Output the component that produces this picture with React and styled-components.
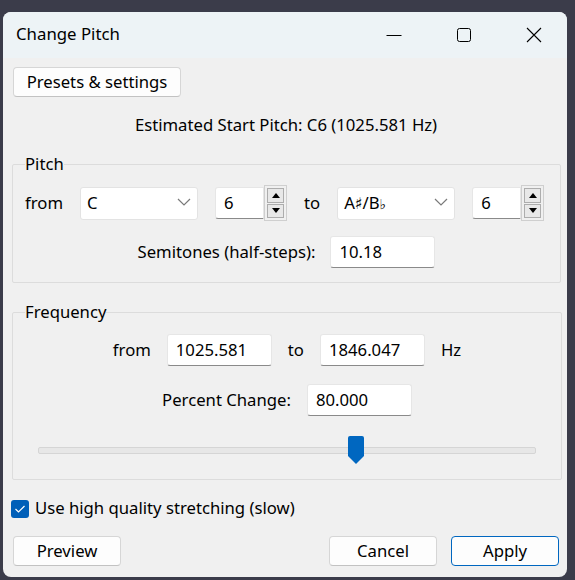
import React from 'react';
import styled, { createGlobalStyle } from 'styled-components';

const GlobalStyle = createGlobalStyle`
  html, body {
    margin: 0;
    padding: 0;
    background: #3b3c4a;
    overflow: hidden;
  }
  body {
    font-family: 'Noto Sans', 'DejaVu Sans', 'Open Sans', sans-serif;
    color: #000;
  }
`;

const FONT = '16.7px';

const Desktop = styled.div`
  width: 575px;
  height: 580px;
  padding: 12px 8px 3px 3px;
  box-sizing: border-box;
`;

const Window = styled.div`
  width: 564px;
  height: 565px;
  background: #f0f0f0;
  border-radius: 8px;
  overflow: hidden;
  display: flex;
  flex-direction: column;
`;

const TitleBar = styled.div`
  height: 46px;
  flex: none;
  display: flex;
  align-items: center;
  background: #edf3f6;
  padding-left: 13px;
`;

const Title = styled.div`
  flex: 1;
  font-size: 16.8px;
  padding-bottom: 3px;
`;

const Controls = styled.div`
  display: flex;
  height: 100%;
  margin-right: -2px;
`;

const ControlButton = styled.div`
  width: 70px;
  height: 100%;
  display: flex;
  align-items: center;
  justify-content: center;
`;

const Body = styled.div`
  flex: 1;
  display: flex;
  flex-direction: column;
  padding: 9px 8px 0 8px;
`;

const PushButton = styled.button`
  font-family: inherit;
  font-size: ${FONT};
  color: #000;
  height: 30px;
  width: ${(p) => p.$width}px;
  background: #fdfdfd;
  border: 1px solid ${(p) => (p.$default ? '#0067c0' : '#d6d6d6')};
  border-bottom-color: ${(p) => (p.$default ? '#0067c0' : '#c2c2c2')};
  border-radius: 4px;
  padding: 0 0 2px 0;
`;

const TopRow = styled.div`
  padding-left: 2px;
`;

const Estimate = styled.div`
  text-align: center;
  font-size: ${FONT};
  margin-top: 16px;
  padding-left: 2px;
`;

const Group = styled.fieldset`
  margin: ${(p) => p.$top}px 0 0 1px;
  width: ${(p) => p.$width}px;
  box-sizing: border-box;
  height: ${(p) => p.$height}px;
  border: 1px solid #dcdcdc;
  border-radius: 2px;
  padding: 0 12px;
  display: flex;
  flex-direction: column;
  align-items: center;
`;

const Legend = styled.legend`
  font-size: ${FONT};
  padding: 0;
  line-height: 20px;
`;

const Row = styled.div`
  display: flex;
  align-items: center;
  gap: ${(p) => p.$gap || 16}px;
  margin-top: ${(p) => p.$top}px;
  align-self: ${(p) => (p.$left ? 'flex-start' : 'center')};
`;

const Label = styled.span`
  font-size: ${FONT};
  white-space: nowrap;
  padding-bottom: 2px;
`;

const TextBox = styled.div`
  width: ${(p) => p.$width}px;
  height: 32px;
  box-sizing: border-box;
  background: #fff;
  border: 1px solid #e6e6e6;
  border-bottom: 1px solid #8a8a8a;
  border-radius: 3px;
  display: flex;
  align-items: center;
  padding: 0 0 2px 8px;
  font-size: ${FONT};
`;

const Combo = styled.div`
  width: 118px;
  height: 33px;
  box-sizing: border-box;
  background: #fff;
  border: 1px solid #e3e3e3;
  border-radius: 3px;
  display: flex;
  align-items: center;
  justify-content: space-between;
  padding: 0 6px 2px 6px;
  font-size: ${FONT};
`;

const Accidental = styled.span`
  font-family: 'DejaVu Sans', sans-serif;
  font-size: ${(p) => p.$size}px;
`;

const Spin = styled.div`
  display: flex;
  align-items: center;
`;

const SpinField = styled(TextBox)`
  width: 49px;
  border-radius: 3px 0 0 3px;
`;

const SpinButtons = styled.div`
  width: 23px;
  height: 36px;
  box-sizing: border-box;
  border: 1px solid #cfcfcf;
  background: #f0f0f0;
  display: flex;
  flex-direction: column;
  padding: 2px;
  gap: 1px;
`;

const SpinArrow = styled.div`
  flex: 1;
  background: #e8e8e8;
  border: 1px solid #adadad;
  display: flex;
  align-items: center;
  justify-content: center;
`;

const SliderBox = styled.div`
  position: relative;
  align-self: stretch;
  margin: 20px 13px 0 13px;
  height: 28px;
  display: flex;
  align-items: center;
`;

const Track = styled.div`
  flex: 1;
  height: 5px;
  background: #e7e7e7;
  border: 1px solid #d5d5d5;
  border-radius: 2px;
`;

const Thumb = styled.svg`
  position: absolute;
  top: 0;
  margin-left: -8px;
`;

const CheckRow = styled.div`
  display: flex;
  align-items: center;
  gap: 6px;
  margin-top: 16px;
`;

const CheckBox = styled.div`
  width: 18px;
  height: 18px;
  border-radius: 3px;
  background: #005fb8;
  display: flex;
  align-items: center;
  justify-content: center;
`;

const ButtonBar = styled.div`
  display: flex;
  align-items: center;
  gap: 14px;
  margin-top: 15px;
  padding: 0 0 0 2px;
`;

const Spacer = styled.div`
  flex: 1;
`;

const Chevron = () => (
  <svg width="14" height="8" viewBox="0 0 14 8">
    <path d="M1 1 L7 7 L13 1" fill="none" stroke="#7a7a7a" strokeWidth="1.2" />
  </svg>
);

const Triangle = ({ up }) => (
  <svg width="8" height="5" viewBox="0 0 8 5">
    <path d={up ? 'M0 5 L4 0 L8 5 Z' : 'M0 0 L4 5 L8 0 Z'} fill="#000" />
  </svg>
);

const SpinControl = ({ value }) => (
  <Spin>
    <SpinField>{value}</SpinField>
    <SpinButtons>
      <SpinArrow>
        <Triangle up />
      </SpinArrow>
      <SpinArrow>
        <Triangle />
      </SpinArrow>
    </SpinButtons>
  </Spin>
);

const sliderPos = 0.644;

export default function App() {
  return (
    <Desktop>
      <GlobalStyle />
      <Window>
        <TitleBar>
          <Title>Change Pitch</Title>
          <Controls>
            <ControlButton>
              <svg width="16" height="16" viewBox="0 0 16 16">
                <path d="M0.5 8.5 H15.5" stroke="#000" strokeWidth="1" />
              </svg>
            </ControlButton>
            <ControlButton>
              <svg width="16" height="16" viewBox="0 0 16 16">
                <rect x="1.5" y="1.5" width="13" height="13" rx="2" fill="none" stroke="#000" strokeWidth="1" />
              </svg>
            </ControlButton>
            <ControlButton>
              <svg width="16" height="16" viewBox="0 0 16 16">
                <path d="M1 1 L15 15 M15 1 L1 15" stroke="#000" strokeWidth="1.1" />
              </svg>
            </ControlButton>
          </Controls>
        </TitleBar>
        <Body>
          <TopRow>
            <PushButton $width={168}>Presets &amp; settings</PushButton>
          </TopRow>
          <Estimate>Estimated Start Pitch: C6 (1025.581 Hz)</Estimate>
          <Group $top={18} $width={549} $height={129}>
            <Legend>Pitch</Legend>
            <Row $left $top={11} $gap={17}>
              <Label>from</Label>
              <Combo>
                <span>C</span>
                <Chevron />
              </Combo>
              <SpinControl value="6" />
              <Label>to</Label>
              <Combo>
                <span>
                  A<Accidental $size={16}>♯</Accidental>/B<Accidental $size={14}>♭</Accidental>
                </span>
                <Chevron />
              </Combo>
              <SpinControl value="6" />
            </Row>
            <Row $top={15} $gap={15}>
              <Label>Semitones (half-steps):</Label>
              <TextBox $width={105}>10.18</TextBox>
            </Row>
          </Group>
          <Group $top={19} $width={550} $height={178}>
            <Legend>Frequency</Legend>
            <Row $top={12} $gap={16}>
              <Label>from</Label>
              <TextBox $width={105}>1025.581</TextBox>
              <Label>to</Label>
              <TextBox $width={105}>1846.047</TextBox>
              <Label>Hz</Label>
            </Row>
            <Row $top={18} $gap={16}>
              <Label>Percent Change:</Label>
              <TextBox $width={105}>80.000</TextBox>
            </Row>
            <SliderBox>
              <Track />
              <Thumb
                width="16"
                height="28"
                viewBox="0 0 16 28"
                style={{ left: `calc(8px + (100% - 16px) * ${sliderPos})` }}
              >
                <path d="M2 0 H14 Q16 0 16 2 V20 L8 28 L0 20 V2 Q0 0 2 0 Z" fill="#0067c0" />
              </Thumb>
            </SliderBox>
          </Group>
          <CheckRow>
            <CheckBox>
              <svg width="12" height="10" viewBox="0 0 12 10">
                <path d="M1.5 5 L4.5 8 L10.5 2" fill="none" stroke="#fff" strokeWidth="1.2" />
              </svg>
            </CheckBox>
            <Label>Use high quality stretching (slow)</Label>
          </CheckRow>
          <ButtonBar>
            <PushButton $width={108}>Preview</PushButton>
            <Spacer />
            <PushButton $width={108}>Cancel</PushButton>
            <PushButton $width={108} $default>
              Apply
            </PushButton>
          </ButtonBar>
        </Body>
      </Window>
    </Desktop>
  );
}
